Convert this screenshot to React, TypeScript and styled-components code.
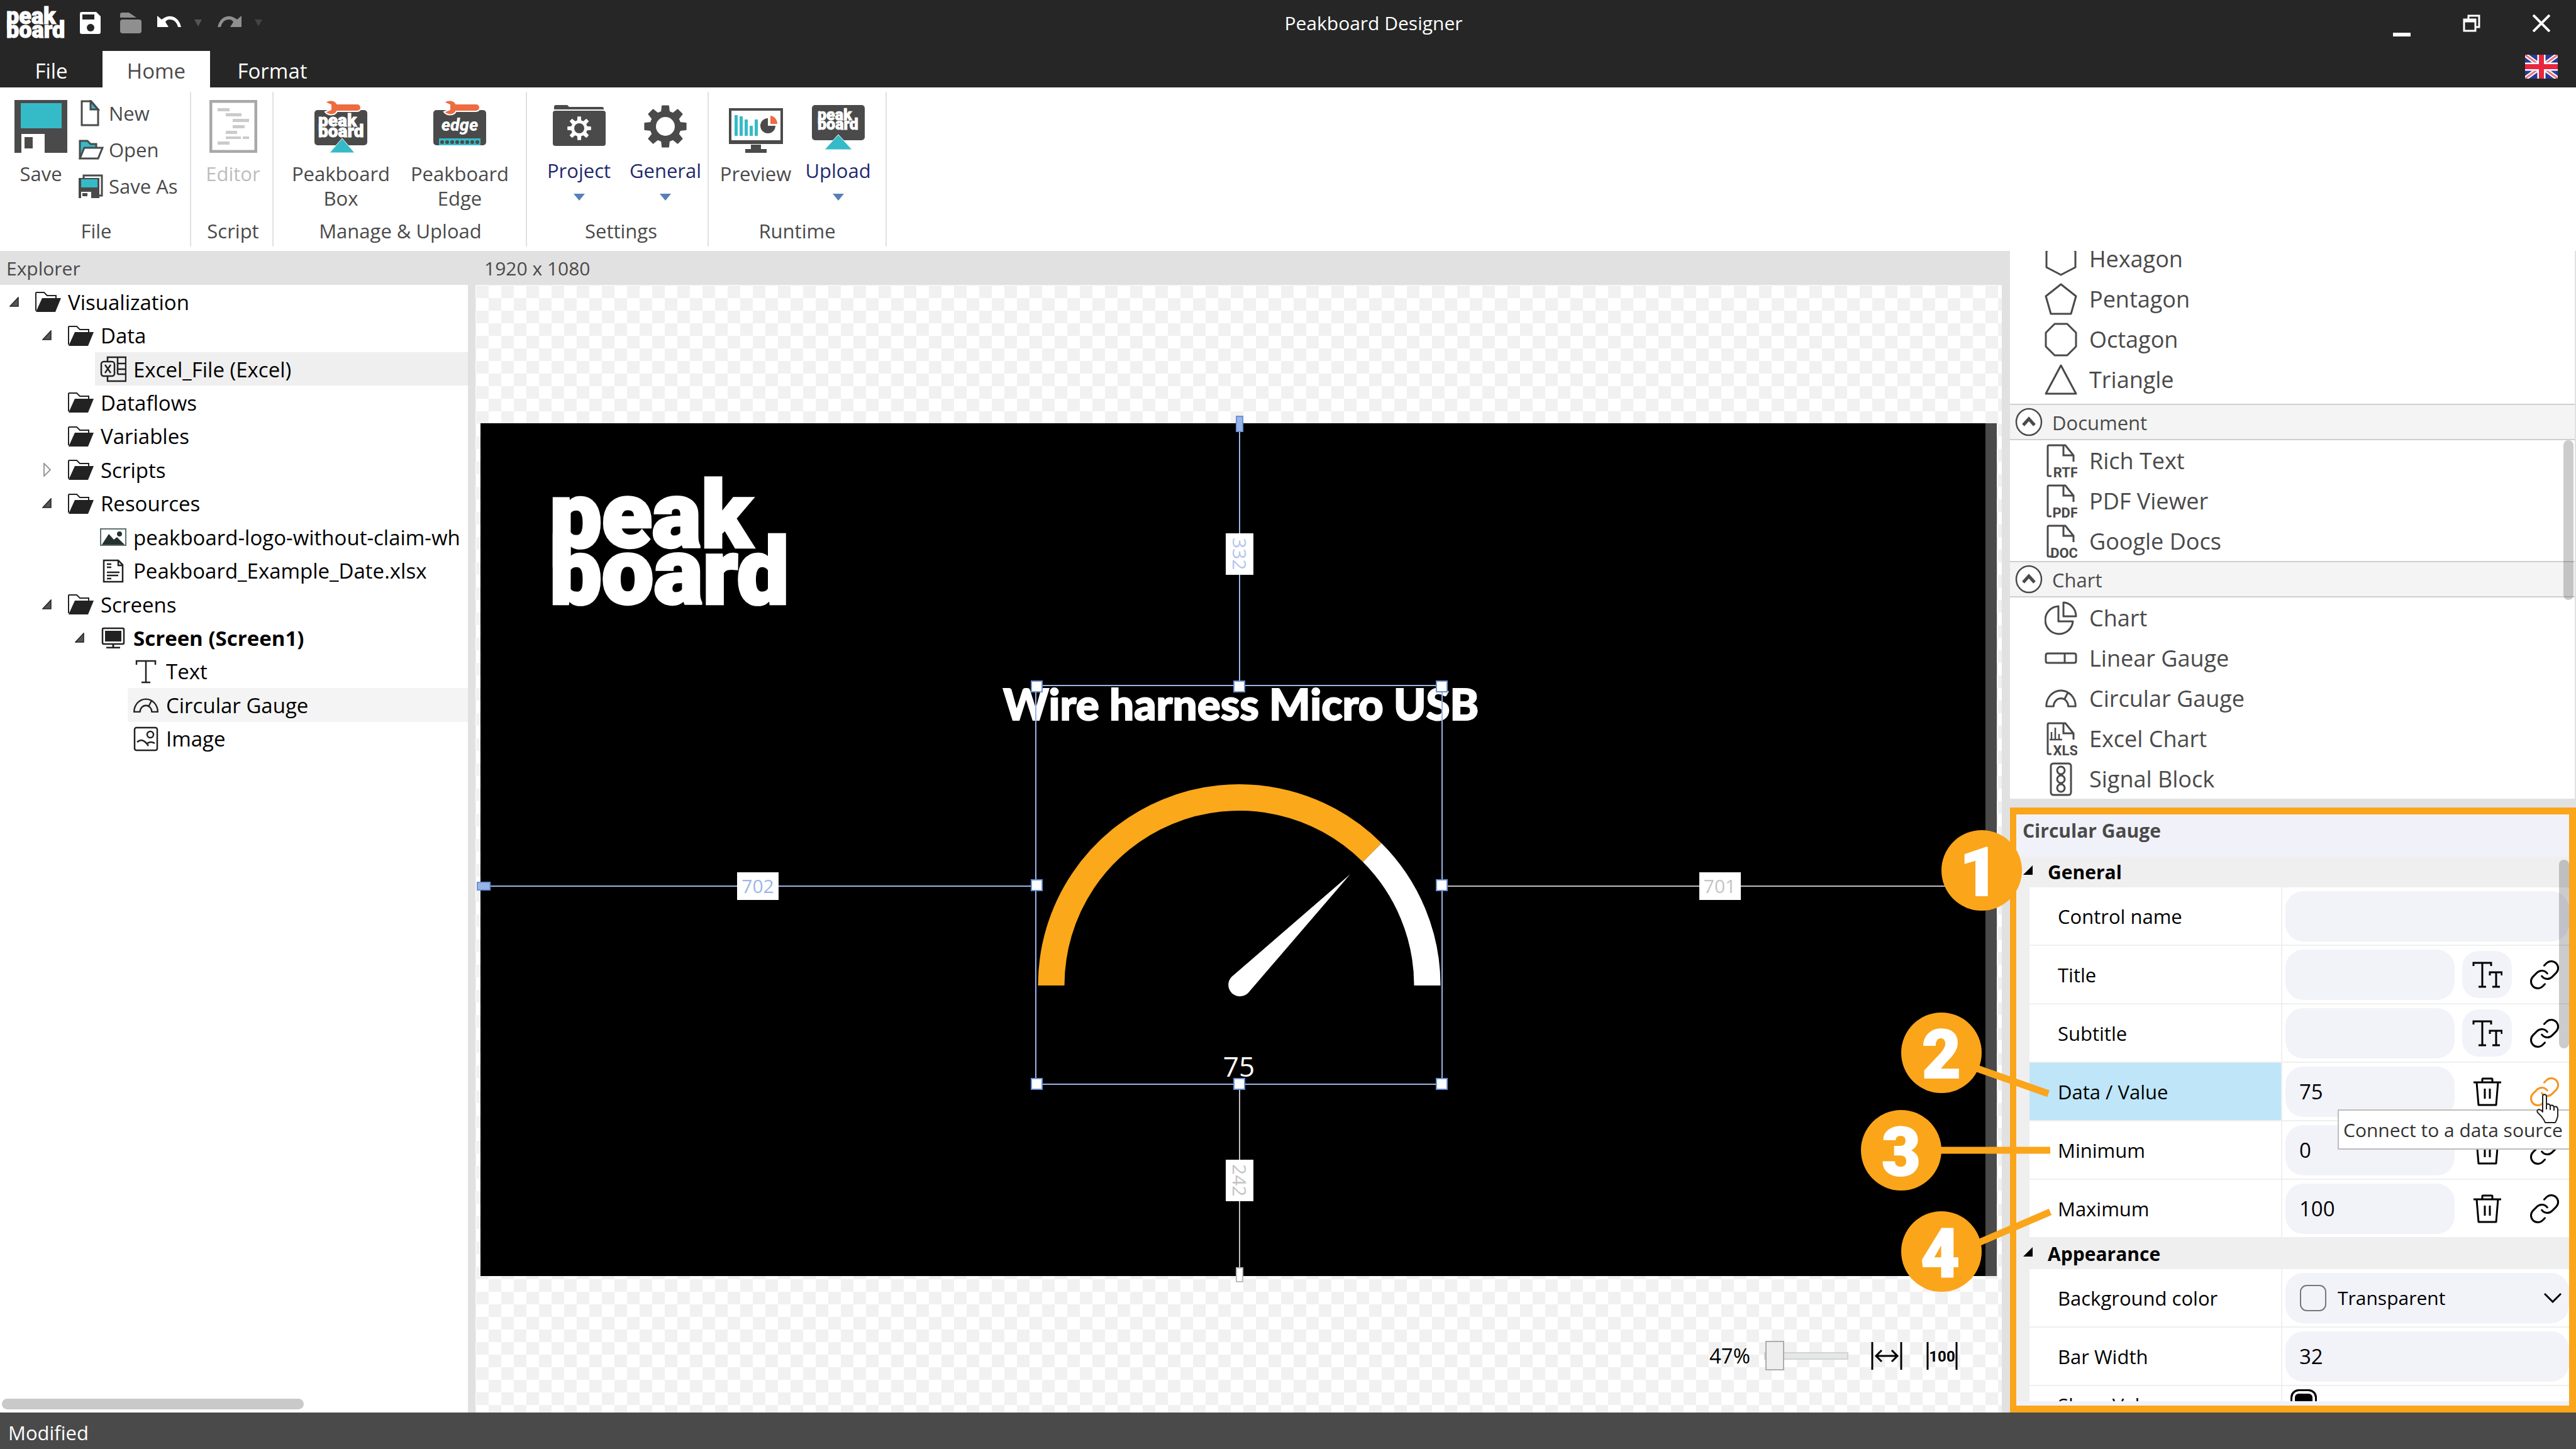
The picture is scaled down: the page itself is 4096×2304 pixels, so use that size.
import React from "react";
import styled, { createGlobalStyle, css } from "styled-components";
import { Link } from "lucide-react";

const UI = `"Open Sans", "Noto Sans", sans-serif`;
const DARK = "#4a4a4a";
const TEAL = "#35bac8";
const ORANGE = "#faa51a";
const CORAL = "#ee6c40";

const GlobalStyle = createGlobalStyle`
  *, *::before, *::after { box-sizing: border-box; }
  body { margin: 0; background: #fff; font-family: ${UI}; font-size: 31px; color: #000; }
  button, input, select { font: inherit; color: inherit; margin: 0; }
  button { background: none; border: 0; padding: 0; }
  svg { display: block; flex: none; }
  ul { list-style: none; margin: 0; padding: 0; }
  h2, h3 { margin: 0; font: inherit; }
`;

/* ---------- frame ---------- */
const Window = styled.div`
  display: flex;
  flex-direction: column;
  height: 100vh;
  overflow: hidden;
`;

const TitleBar = styled.header`
  display: flex;
  height: 81px;
  padding-bottom: 8px;
  background: #262626;
  color: #fff;
`;

const QuickAccess = styled.div`
  display: flex;
  align-items: center;
  width: 605px;
  padding-left: 11px;
`;

const QuickButton = styled.button<{ $gap: number }>`
  display: flex;
  align-items: center;
  margin-left: ${(p) => p.$gap}px;
`;

const WindowTitle = styled.div`
  flex: 1;
  display: flex;
  align-items: center;
  justify-content: center;
  font-size: 30px;
`;

const CaptionButton = styled.button`
  display: flex;
  align-items: center;
  justify-content: center;
  width: 111px;
`;

const TabStrip = styled.nav`
  display: flex;
  height: 58px;
  background: #262626;
`;

const Tab = styled.button<{ $active?: boolean; $width: number }>`
  width: ${(p) => p.$width}px;
  padding-top: 5px;
  font-size: 33px;
  line-height: 46px;
  color: ${(p) => (p.$active ? DARK : "#fff")};
  background: ${(p) => (p.$active ? "#fff" : "transparent")};
`;

const LanguageButton = styled.button`
  margin: 0 29px 0 auto;
  padding-bottom: 8px;
  display: flex;
  align-items: center;
`;

/* ---------- ribbon ---------- */
const Ribbon = styled.div`
  display: flex;
  height: 260px;
  padding: 7px 0;
  background: #fff;
  color: ${DARK};
`;

const Group = styled.section<{ $width: number; $shift?: number }>`
  display: flex;
  flex-direction: column;
  width: ${(p) => p.$width}px;
  padding: 0 0 5px ${(p) => p.$shift ?? 0}px;
  border-right: 2px solid #e1e1e1;
`;

const GroupItems = styled.div`
  flex: 1;
  display: flex;
  justify-content: center;
`;

const GroupLabel = styled.div`
  text-align: center;
  line-height: 40px;
`;

const RibbonButton = styled.button<{ $width: number; $menu?: boolean }>`
  display: flex;
  flex-direction: column;
  align-items: center;
  gap: ${(p) => (p.$menu ? 9 : 14)}px;
  width: ${(p) => p.$width}px;
  padding-top: 13px;
  line-height: 39px;
  color: ${(p) => (p.$menu ? "#1f2a6e" : DARK)};
  &:disabled { color: #bdbdbd; }
`;

const Caret = styled.span<{ $color: string; $size?: number }>`
  width: 0;
  height: 0;
  border: ${(p) => p.$size ?? 9}px solid transparent;
  border-top: 11px solid ${(p) => p.$color};
  border-bottom: 0;
`;

const MenuCaret = styled(Caret)`
  margin-top: 8px;
`;

const Stack = styled.div`
  display: flex;
  flex-direction: column;
  padding: 5px 0 0 10px;
  width: 176px;
`;

const SmallButton = styled.button`
  display: grid;
  grid-template-columns: 40px auto;
  align-items: center;
  justify-items: start;
  column-gap: 8px;
  height: 58px;
  justify-content: start;
  white-space: nowrap;
`;

/* ---------- body ---------- */
const Body = styled.div`
  flex: 1;
  min-height: 0;
  display: flex;
  background: #e1e1e1;
`;

const PaneTitle = styled.h2`
  height: 54px;
  line-height: 56px;
  font-size: 30px;
  color: ${DARK};
`;

const Explorer = styled.aside`
  display: flex;
  flex-direction: column;
  width: 744px;
  flex: none;
`;

const ExplorerTitle = styled(PaneTitle)`
  padding-left: 10px;
`;

const TreeArea = styled.div`
  flex: 1;
  min-height: 0;
  background: #fff;
  overflow: hidden;
`;

const Tree = styled.ul`
  display: grid;
  grid-auto-rows: 1fr;
  height: 748px;
`;

const TreeRow = styled.li<{ $level: number }>`
  display: flex;
  padding-left: ${(p) => p.$level * 52}px;
`;

const Toggle = styled.span`
  display: flex;
  align-items: center;
  justify-content: flex-end;
  width: 47px;
  padding-right: 17px;
  flex: none;
`;

const TreeItem = styled.button<{ $bg?: string; $bold?: boolean }>`
  flex: 1;
  display: flex;
  align-items: center;
  gap: 11px;
  padding: 1px 0 0 8px;
  font-size: 33px;
  white-space: nowrap;
  text-align: left;
  font-weight: ${(p) => (p.$bold ? 700 : 400)};
  background: ${(p) => p.$bg ?? "transparent"};
`;

const TreeIcon = styled.span`
  width: 42px;
  display: flex;
  justify-content: center;
  flex: none;
`;

const ScrollTrack = styled.div`
  height: 24px;
  padding: 2px 3px;
  background: #fff;
`;

const ScrollThumb = styled.div`
  width: 480px;
  height: 17px;
  border-radius: 9px;
  background: #c9c9c9;
`;

/* ---------- stage ---------- */
const Workspace = styled.main`
  flex: 1;
  min-width: 0;
  display: flex;
  flex-direction: column;
  margin-left: 12px;
`;

const WorkspaceTitle = styled(PaneTitle)`
  padding-left: 14px;
`;

const Stage = styled.div`
  flex: 1;
  display: flex;
  flex-direction: column;
  padding: 220px 8px 0;
  background: repeating-conic-gradient(#fff 0 25%, #f1f1f1 0 50%) 1px 1px / 40px 40px;
`;

const Canvas = styled.div`
  position: relative;
  flex: 1;
  background: #000;
  border-right: 18px solid ${DARK};
`;

const CanvasLogo = styled.div`
  position: absolute;
  left: 114px;
  top: 88px;
`;

const CanvasTitle = styled.div`
  position: absolute;
  left: 831px;
  top: 404px;
  font: 900 69px/84px Lato, "Open Sans", sans-serif;
  -webkit-text-stroke: 2px #fff;
  color: #fff;
  white-space: nowrap;
`;

const Selection = styled.div`
  position: absolute;
  left: 882px;
  top: 416px;
  width: 648px;
  height: 636px;
  border: 2px solid #9ab4e6;
`;

const GaugeValue = styled.div`
  position: absolute;
  left: 0;
  right: 0;
  bottom: 0;
  text-align: center;
  font-size: 44px;
  line-height: 56px;
  color: #fff;
`;

const Handle = styled.span<{ $x: number; $y: number }>`
  position: absolute;
  left: ${(p) => p.$x}%;
  top: ${(p) => p.$y}%;
  width: 19px;
  height: 19px;
  margin: -9px 0 0 -9px;
  background: #fff;
  border: 2px solid #6c93d6;
`;

const Guide = styled.div<{ $side: "top" | "left" | "right" | "bottom" }>`
  position: absolute;
  display: flex;
  align-items: center;
  justify-content: center;
  ${(p) => p.$side === "top" && css`left: 1206px; top: 0; width: 2px; height: 416px; background: #9ab4e6;`}
  ${(p) => p.$side === "bottom" && css`left: 1206px; top: 1052px; width: 2px; bottom: 0; background: #bdbdbd;`}
  ${(p) => p.$side === "left" && css`left: 0; top: 735px; height: 2px; width: 882px; background: #9ab4e6;`}
  ${(p) => p.$side === "right" && css`left: 1530px; top: 735px; height: 2px; right: -18px; background: #bdbdbd;`}
`;

const GuideLabel = styled.span<{ $vertical?: boolean; $color: string }>`
  display: flex;
  align-items: center;
  justify-content: center;
  flex: none;
  width: ${(p) => (p.$vertical ? 44 : 66)}px;
  height: ${(p) => (p.$vertical ? 66 : 44)}px;
  writing-mode: ${(p) => (p.$vertical ? "vertical-rl" : "horizontal-tb")};
  font-size: 30px;
  line-height: 44px;
  color: ${(p) => p.$color};
  background: #fff;
`;

const GuideEnd = styled.i<{ $side: "top" | "left" | "bottom" }>`
  position: absolute;
  border: 2px solid #6c93d6;
  background: #9ab4e6;
  ${(p) => p.$side === "top" && css`top: -12px; left: -5px; width: 12px; height: 26px;`}
  ${(p) => p.$side === "left" && css`left: -6px; top: -6px; width: 22px; height: 14px;`}
  ${(p) => p.$side === "bottom" && css`bottom: -10px; left: -5px; width: 12px; height: 24px; background: #fff; border-color: #bdbdbd;`}
`;

const ZoomBar = styled.div`
  display: flex;
  align-items: center;
  justify-content: flex-end;
  height: 217px;
  padding: 36px 62px 0 0;
`;

const ZoomLabel = styled.label`
  font-size: 33px;
  line-height: 46px;
  margin-right: 22px;
`;

const ZoomSlider = styled.input`
  appearance: none;
  width: 134px;
  height: 47px;
  margin: 0 36px 0 0;
  background: transparent;
  &::-webkit-slider-runnable-track {
    height: 12px;
    background: #e5e8e8;
    border: 2px solid #d3d3d3;
  }
  &::-webkit-slider-thumb {
    appearance: none;
    width: 30px;
    height: 47px;
    margin-top: -20px;
    background: #eee;
    border: 2px solid #adadad;
  }
`;

const ZoomButton = styled.button`
  width: 50px;
  height: 46px;
  & + & { margin-left: 38px; }
`;

/* ---------- right column ---------- */
const Side = styled.aside`
  width: 900px;
  margin-left: 13px;
  flex: none;
  display: flex;
  flex-direction: column;
`;

const Toolbox = styled.div`
  position: relative;
  overflow: hidden;
  background: #fff;
  color: ${DARK};
  border-right: 2px solid #e1e1e1;
`;

const ToolHeader = styled.button`
  display: flex;
  align-items: center;
  gap: 15px;
  width: 100%;
  height: 58px;
  padding-left: 8px;
  background: #f4f4f4;
  border: solid #cfcfcf;
  border-width: 2px 0;
`;

const HeaderText = styled.span`
  padding-top: 2px;
`;

const ToolList = styled.ul<{ $scrolled?: boolean }>`
  margin-top: ${(p) => (p.$scrolled ? -20 : 0)}px;
  padding-bottom: ${(p) => (p.$scrolled ? 7 : 0)}px;
`;

const ToolRow = styled.li`
  display: flex;
  align-items: center;
  gap: 19px;
  height: 64px;
  padding: 1px 0 0 55px;
  font-size: 36px;
`;

const VThumb = styled.div<{ $top: number; $height: number }>`
  position: absolute;
  right: 2px;
  top: ${(p) => p.$top}px;
  width: 16px;
  height: ${(p) => p.$height}px;
  border-radius: 8px;
  background: rgba(0, 0, 0, 0.2);
`;

const PropThumb = styled(VThumb)`
  right: 0;
`;

const Properties = styled.section`
  position: relative;
  flex: 1;
  min-height: 0;
  margin-top: 14px;
  display: flex;
  flex-direction: column;
  padding-bottom: 7px;
  background: #f1f2f9;
  border: 11px solid ${ORANGE};
  border-left-width: 10px;
`;

const PropTitle = styled.h2`
  height: 67px;
  padding: 5px 0 0 10px;
  font-size: 30px;
  font-weight: 700;
  line-height: 42px;
  color: ${DARK};
`;

const PropScroll = styled.div`
  position: relative;
  flex: 1;
  min-height: 0;
  overflow: hidden;
  background: #efefef;
`;

const Section = styled.h3`
  display: flex;
  align-items: center;
  gap: 24px;
  height: 49px;
  padding-left: 11px;
  font-size: 30px;
  font-weight: 700;
`;

const PropRow = styled.div<{ $short?: boolean }>`
  display: grid;
  grid-template-columns: 400px 1fr;
  column-gap: 2px;
  height: ${(p) => (p.$short ? 60 : 93)}px;
  margin-left: 21px;
  padding-bottom: 2px;
`;

const PropLabel = styled.label<{ $selected?: boolean }>`
  display: flex;
  align-items: center;
  padding: 1px 0 0 45px;
  background: ${(p) => (p.$selected ? "#bee5f8" : "#fff")};
`;

const PropCell = styled.div`
  display: flex;
  align-items: center;
  min-width: 0;
  padding-left: 5px;
  background: #fff;
`;

const Field = styled.input`
  flex: 1;
  min-width: 0;
  height: 80px;
  padding: 0 22px;
  border: 0;
  border-radius: 28px;
  background: #f2f3f9;
  font-size: 33px;
`;

const CellButton = styled.button<{ $filled?: boolean }>`
  flex: none;
  display: flex;
  align-items: center;
  justify-content: center;
  width: 79px;
  height: 75px;
  margin-left: 12px;
  border-radius: 26px;
  background: ${(p) => (p.$filled ? "#f2f3f9" : "transparent")};
`;

const Combo = styled.div`
  flex: 1;
  display: flex;
  align-items: center;
  height: 80px;
  padding: 0 12px 0 23px;
  border-radius: 28px;
  background: #f2f3f9;
`;

const Swatch = styled.span`
  width: 42px;
  height: 42px;
  border: 2px solid #777;
  border-radius: 11px;
`;

const Select = styled.select`
  appearance: none;
  flex: 1;
  border: 0;
  padding: 0 0 0 18px;
  background: transparent;
  font-size: 30px;
`;

const Check = styled.input`
  appearance: none;
  align-self: flex-start;
  width: 42px;
  height: 42px;
  margin: 5px 0 0 8px;
  border: 3px solid #000;
  border-radius: 13px;
  background: #fff;
  &:checked { background: #000; box-shadow: inset 0 0 0 4px #fff; }
`;

const Tooltip = styled.div`
  position: absolute;
  right: 0;
  top: 402px;
  width: 368px;
  height: 64px;
  padding: 5px 0 0 7px;
  border: 2px solid #bdbdbd;
  border-right: 0;
  background: #fff;
  font-size: 30px;
  line-height: 52px;
  white-space: nowrap;
  color: #333;
`;

const Cursor = styled.svg`
  position: absolute;
  right: 15px;
  top: 377px;
`;

const Callouts = styled.svg`
  position: absolute;
  left: -250px;
  top: -11px;
  pointer-events: none;
`;

const StatusBar = styled.footer`
  height: 58px;
  padding: 5px 0 0 13px;
  line-height: 54px;
  font-size: 31px;
  background: ${DARK};
  color: #fff;
`;

/* ---------- drawings ---------- */
const LogoMark = ({ size, x = 0, y = 0 }: { size: number; x?: number; y?: number }) => (
  <g fontFamily="Roboto, sans-serif" fontWeight={900} fontSize={size} fill="#fff" stroke="#fff" strokeWidth={size * 0.03}>
    <text x={x} y={y}>peak</text>
    <text x={x} y={y + size * 0.61}>board</text>
  </g>
);

const gearPath = (cx: number, cy: number, r: number, root: number) => {
  const pts: string[] = [];
  for (let i = 0; i < 8; i++) {
    const a = (i * Math.PI) / 4;
    [[root, -0.25], [r, -0.15], [r, 0.15], [root, 0.25]].forEach(([d, o]) => {
      pts.push(`${(cx + d * Math.sin(a + o)).toFixed(1)} ${(cy - d * Math.cos(a + o)).toFixed(1)}`);
    });
  }
  return `M${pts.join("L")}Z`;
};

const SaveIcon = () => (
  <svg width="84" height="84">
    <rect width="84" height="84" fill={DARK} />
    <rect x="10" y="5" width="65" height="40" fill={TEAL} />
    <path d="M11 84V54H48V84Z" fill="#fff" />
    <rect x="16" y="59" width="13" height="18" fill={DARK} />
  </svg>
);

const NewIcon = () => (
  <svg width="40" height="42" fill="#fff" stroke={DARK} strokeWidth="3">
    <path d="M5 2H20L31 15V40H5Z" />
    <path d="M19 2V15H31Z" fill={TEAL} />
  </svg>
);

const OpenIcon = () => (
  <svg width="40" height="32" stroke={DARK} strokeWidth="3">
    <path d="M2 30V2H14L19 7H28V13" fill={TEAL} />
    <path d="M9 13H38L31 30H2Z" fill="#fff" />
  </svg>
);

const SaveAsIcon = () => (
  <svg width="40" height="38">
    <path d="M8 6V2H37V34H32" fill="#fff" stroke={DARK} strokeWidth="3" />
    <rect x="0" y="6" width="33" height="32" fill={DARK} />
    <rect x="4" y="8" width="26" height="13" fill={TEAL} />
    <rect x="4" y="28" width="16" height="10" fill="#fff" />
    <rect x="6" y="30" width="8" height="5" fill={DARK} />
  </svg>
);

const EditorIcon = () => (
  <svg width="76" height="84" fill="#cbcbcb">
    <rect x="2" y="2" width="72" height="80" fill="#fff" stroke="#a8a8a8" strokeWidth="5" />
    <rect x="13" y="13" width="19" height="5" />
    <rect x="26" y="21" width="25" height="5" />
    <rect x="37" y="30" width="26" height="5" />
    <rect x="37" y="40" width="19" height="5" />
    <rect x="26" y="49" width="18" height="5" />
    <rect x="26" y="58" width="24" height="4" />
    <rect x="53" y="58" width="10" height="4" />
    <rect x="13" y="66" width="19" height="5" />
  </svg>
);

const Wrench = () => (
  <path
    d="M17 4C22 -1 33 -1 36 6H68A6 6 0 0 1 68 18H36C33 25 22 25 17 19L26 15V8Z"
    fill={CORAL}
    stroke="#fff"
    strokeWidth="2"
  />
);

const BoxIcon = () => (
  <svg width="84" height="84">
    <rect y="16" width="84" height="56" rx="5" fill={DARK} />
    <LogoMark size={28} x={6} y={42} />
    <Wrench />
    <path d="M44 61L64 84H24Z" fill={TEAL} stroke="#fff" strokeWidth="1" />
  </svg>
);

const EdgeIcon = () => (
  <svg width="84" height="84">
    <rect y="16" width="84" height="56" rx="5" fill={DARK} />
    <text x="42" y="49" textAnchor="middle" fontFamily="Roboto, sans-serif" fontWeight="900" fontStyle="italic" fontSize="27" fill="#fff">edge</text>
    <Wrench />
    <rect x="9" y="61" width="66" height="11" fill={TEAL} />
    {[14, 22, 30, 38, 46, 54, 62, 70].map((x) => (
      <circle key={x} cx={x} cy="67" r="3" fill={DARK} />
    ))}
  </svg>
);

const ProjectIcon = () => (
  <svg width="84" height="84">
    <path d="M2 14V11Q2 8 5 8H23L26 11H78Q81 11 81 14V15H2Z" fill={DARK} />
    <rect y="17" width="84" height="56" rx="4" fill={DARK} />
    <path d={gearPath(42, 45, 19, 13)} fill="#fff" />
    <circle cx="42" cy="45" r="8" fill={DARK} />
  </svg>
);

const GearIcon = () => (
  <svg width="84" height="84">
    <path d={gearPath(42, 42, 33, 24)} fill={DARK} stroke={DARK} strokeWidth="2" strokeLinejoin="round" />
    <circle cx="42" cy="42" r="15" fill="#fff" />
  </svg>
);

const PreviewIcon = () => (
  <svg width="86" height="84">
    <rect x="2" y="15" width="82" height="53" fill="#fff" stroke={DARK} strokeWidth="4" />
    <rect x="2" y="64" width="82" height="6" fill={DARK} />
    <rect x="35" y="71" width="16" height="8" fill={DARK} />
    <rect x="26" y="78" width="34" height="6" fill={DARK} />
    {[[9, 24], [17, 26], [25, 31], [33, 41], [41, 31]].map(([x, y]) => (
      <rect key={x} x={x} y={y} width="5" height={57 - y} fill={TEAL} />
    ))}
    <path d="M62 29V41H74A12 12 0 1 1 62 29Z" fill={DARK} />
    <path d="M66 25A12 13 0 0 1 77 38H66Z" fill={CORAL} />
  </svg>
);

const UploadIcon = () => (
  <svg width="84" height="84">
    <rect y="8" width="84" height="56" rx="5" fill={DARK} />
    <LogoMark size={25} x={9} y={32} />
    <path d="M42 55L64 79H20Z" fill={TEAL} stroke="#fff" strokeWidth="1" />
  </svg>
);

const FlagIcon = () => (
  <svg width="52" height="38">
    <rect width="52" height="38" fill="#2a3a94" />
    <path d="M0 0L52 38M52 0L0 38" stroke="#fff" strokeWidth="7" />
    <path d="M0 0L52 38M52 0L0 38" stroke="#e8707f" strokeWidth="3" />
    <path d="M26 0V38M0 19H52" stroke="#fff" strokeWidth="13" />
    <path d="M26 0V38M0 19H52" stroke="#e8263f" strokeWidth="8" />
  </svg>
);

const ExpandedMark = () => (
  <svg width="15" height="16"><path d="M1 15H14V1Z" fill="#555" stroke="#222" strokeWidth="1.5" /></svg>
);
const SectionMark = () => (
  <svg width="15" height="22"><path d="M0 15H15V0Z" fill="#000" /></svg>
);
const CollapsedMark = () => (
  <svg width="14" height="22"><path d="M2 1L12 11L2 21Z" fill="#fff" stroke="#999" strokeWidth="2" /></svg>
);

const FolderIcon = () => (
  <svg width="42" height="34">
    <path d="M2 31V3Q2 2 3 2H15L20 7H34V12" fill="#fff" stroke="#222" strokeWidth="2" />
    <path d="M12 11H42L33 33H2Z" fill="#222" />
  </svg>
);

const ExcelIcon = () => (
  <svg width="42" height="42" fill="none" stroke="#222" strokeWidth="2.5">
    <path d="M12 10V2H41V40H12V32M28 2V29M28 12H41M28 21H41M28 29H41" />
    <rect x="2" y="9" width="21" height="23" rx="4" fill="#efefef" />
    <path d="M8 14L17 27M17 14L8 27" />
  </svg>
);

const PictureIcon = () => (
  <svg width="42" height="28">
    <rect x="1" y="1" width="40" height="26" fill="#fff" stroke="#5d7070" strokeWidth="2" />
    <path d="M3 26L14 9L22 18L27 14L39 26Z" fill="#243331" />
    <circle cx="31" cy="9" r="4" fill="#243331" />
  </svg>
);

const DocIcon = () => (
  <svg width="34" height="38" fill="none" stroke="#222" strokeWidth="2.5">
    <path d="M2 2H25L32 9V36H2Z" />
    <path d="M7 8H14M7 13H14M7 21H27M7 26H25M7 31H14M25 2V10H32" />
  </svg>
);

const ScreenIcon = () => (
  <svg width="38" height="34">
    <rect x="2" y="2" width="34" height="25" rx="2" fill="#fff" stroke="#222" strokeWidth="2.5" />
    <rect x="6" y="6" width="26" height="17" fill="#222" />
    <path d="M19 27V32M8 33H30" stroke="#222" strokeWidth="3" />
  </svg>
);

const TextIcon = () => (
  <svg width="34" height="38" fill="none" stroke="#222" strokeWidth="2.5">
    <path d="M2 8V2H32V8M17 2V36M10 36H24" />
  </svg>
);

const GaugeIcon = ({ size = 52, color = DARK }: { size?: number; color?: string }) => (
  <svg width={size} height={size * 0.56} viewBox="0 0 52 30" fill="none" stroke={color} strokeWidth="3" strokeLinejoin="round">
    <path d="M2 28A24 26 0 0 1 50 28H38A12 13 0 0 0 14 28ZM32 16L37 6" />
  </svg>
);

const ImageIcon = () => (
  <svg width="40" height="40" fill="none" stroke="#222" strokeWidth="2.5">
    <rect x="2" y="2" width="36" height="36" rx="3" />
    <circle cx="27" cy="13" r="5" />
    <path d="M6 25Q15 17 24 31M22 27Q28 23 34 27" />
  </svg>
);

const Shape = ({ d }: { d: string }) => (
  <svg width="52" height="54" viewBox="0 0 52 54" fill="none" stroke={DARK} strokeWidth="3" strokeLinejoin="round">
    <path d={d} />
  </svg>
);

const FileIcon = ({ tag, bars }: { tag: string; bars?: boolean }) => (
  <svg width="52" height="54" viewBox="0 0 52 54" fill="none" stroke={DARK} strokeWidth="3">
    <path d="M11 51H7Q5 51 5 49V4Q5 2 7 2H33L46 18V28M30 2V18H46" />
    {bars && <path d="M11 16V28M17 9V28M23 19V28M8 28H28" strokeWidth="2.5" />}
    <text x="53" y="53" textAnchor="end" fontFamily="Roboto, sans-serif" fontWeight="700" fontSize="22" fill={DARK} stroke="none">{tag}</text>
  </svg>
);

const ChevronCircle = () => (
  <svg width="44" height="46" fill="none" stroke={DARK}>
    <ellipse cx="22" cy="23" rx="20" ry="21" fill="#fff" strokeWidth="2.5" />
    <path d="M13 28L22 18L31 28" strokeWidth="5" />
  </svg>
);

const TypeIcon = () => (
  <svg width="48" height="42" fill="none" stroke="#000" strokeWidth="3">
    <path d="M2 7V2H30V7M16 2V40M10 40H22M28 22V17H47V22M38 17V40M32 40H44" />
  </svg>
);

const TrashIcon = () => (
  <svg width="46" height="46" fill="none" stroke="#000" strokeWidth="3" strokeLinejoin="round">
    <path d="M1 8H45M6 8L9 44H37L40 8M15 8V3Q15 2 16 2H30Q31 2 31 3V8M19 18V34M27 18V34" />
  </svg>
);

/* ---------- data ---------- */
type Node = { label: string; level: number; icon: React.ReactNode; open?: boolean; bg?: string; bold?: boolean };

const tree: Node[] = [
  { label: "Visualization", level: 0, icon: <FolderIcon />, open: true },
  { label: "Data", level: 1, icon: <FolderIcon />, open: true },
  { label: "Excel_File (Excel)", level: 2, icon: <ExcelIcon />, bg: "#efefef" },
  { label: "Dataflows", level: 1, icon: <FolderIcon /> },
  { label: "Variables", level: 1, icon: <FolderIcon /> },
  { label: "Scripts", level: 1, icon: <FolderIcon />, open: false },
  { label: "Resources", level: 1, icon: <FolderIcon />, open: true },
  { label: "peakboard-logo-without-claim-wh", level: 2, icon: <PictureIcon /> },
  { label: "Peakboard_Example_Date.xlsx", level: 2, icon: <DocIcon /> },
  { label: "Screens", level: 1, icon: <FolderIcon />, open: true },
  { label: "Screen (Screen1)", level: 2, icon: <ScreenIcon />, open: true, bold: true },
  { label: "Text", level: 3, icon: <TextIcon /> },
  { label: "Circular Gauge", level: 3, icon: <GaugeIcon size={42} color="#222" />, bg: "#f4f4f4" },
  { label: "Image", level: 3, icon: <ImageIcon /> },
];

const shapes = [
  { label: "Hexagon", icon: <Shape d="M26 3L49 14V40L26 52L3 40V14Z" /> },
  { label: "Pentagon", icon: <Shape d="M26 3L50 22L42 50H10L2 22Z" /> },
  { label: "Octagon", icon: <Shape d="M16 2H36L50 16V38L36 52H16L2 38V16Z" /> },
  { label: "Triangle", icon: <Shape d="M26 4L50 49H2Z" /> },
];

const documents = [
  { label: "Rich Text", icon: <FileIcon tag="RTF" /> },
  { label: "PDF Viewer", icon: <FileIcon tag="PDF" /> },
  { label: "Google Docs", icon: <FileIcon tag="DOC" /> },
];

const charts = [
  { label: "Chart", icon: <Shape d="M22 8V32H45A22 22 0 1 1 22 8ZM30 2A21 22 0 0 1 50 24H30Z" /> },
  { label: "Linear Gauge", icon: <Shape d="M5 19H47Q50 19 50 22V31Q50 34 47 34H5Q2 34 2 31V22Q2 19 5 19ZM32 19V34" /> },
  { label: "Circular Gauge", icon: <GaugeIcon /> },
  { label: "Excel Chart", icon: <FileIcon tag="XLS" bars /> },
  {
    label: "Signal Block",
    icon: (
      <svg width="52" height="54" fill="none" stroke={DARK} strokeWidth="3">
        <rect x="10" y="2" width="32" height="50" rx="4" />
        <circle cx="26" cy="13" r="6" />
        <circle cx="26" cy="27" r="6" />
        <circle cx="26" cy="41" r="6" />
      </svg>
    ),
  },
];

const handles = [[0, 0], [50, 0], [100, 0], [0, 50], [100, 50], [0, 100], [50, 100], [100, 100]];

const Tools = ({ items, scrolled }: { items: { label: string; icon: React.ReactNode }[]; scrolled?: boolean }) => (
  <ToolList $scrolled={scrolled}>
    {items.map((t) => (
      <ToolRow key={t.label}>{t.icon}{t.label}</ToolRow>
    ))}
  </ToolList>
);

const Property = ({ id, label, value, kind, selected }: { id: string; label: string; value: string; kind: "plain" | "text" | "data"; selected?: boolean }) => (
  <PropRow>
    <PropLabel htmlFor={id} $selected={selected}>{label}</PropLabel>
    <PropCell>
      <Field id={id} defaultValue={value} />
      {kind === "text" && <CellButton $filled aria-label="Text options"><TypeIcon /></CellButton>}
      {kind === "data" && <CellButton aria-label="Clear"><TrashIcon /></CellButton>}
      {kind !== "plain" && (
        <CellButton aria-label="Connect">
          <Link size={52} strokeWidth={1.4} color={selected ? "#f7941d" : "#000"} />
        </CellButton>
      )}
    </PropCell>
  </PropRow>
);

export default function App() {
  return (
    <Window>
      <GlobalStyle />
      <TitleBar>
        <QuickAccess>
          <svg width="92" height="56" overflow="visible"><LogoMark size={36} x={-1} y={29} /></svg>
          <QuickButton $gap={24} aria-label="Save">
            <svg width="33" height="35">
              <path d="M3 0H26L33 7V32Q33 35 30 35H3Q0 35 0 32V3Q0 0 3 0Z" fill="#fff" />
              <rect x="4" y="4" width="19" height="8" fill="#262626" />
              <circle cx="17" cy="25" r="6" fill="#262626" />
            </svg>
          </QuickButton>
          <QuickButton $gap={31} aria-label="Open">
            <svg width="34" height="33" fill="#8f8f8f">
              <path d="M0 8V3Q0 0 3 0H14L26 8Z" />
              <rect y="11" width="34" height="22" rx="4" />
            </svg>
          </QuickButton>
          <QuickButton $gap={25} aria-label="Undo">
            <svg width="38" height="24" overflow="visible">
              <path d="M0 0L7 6Q22 -5 33 7Q37 12 38 18H33Q30 6 20 6Q15 6 13 10L18 18H0Z" fill="#fff" />
            </svg>
          </QuickButton>
          <QuickButton $gap={21} aria-label="Undo list"><Caret $color="#555" $size={6} /></QuickButton>
          <QuickButton $gap={25} aria-label="Redo">
            <svg width="38" height="24" overflow="visible">
              <path d="M38 0L31 6Q16 -5 5 7Q1 12 0 18H5Q8 6 18 6Q23 6 25 10L20 18H38Z" fill="#8f8f8f" />
            </svg>
          </QuickButton>
          <QuickButton $gap={21} aria-label="Redo list"><Caret $color="#444" $size={6} /></QuickButton>
        </QuickAccess>
        <WindowTitle>Peakboard Designer</WindowTitle>
        <CaptionButton aria-label="Minimize">
          <svg width="28" height="42"><rect y="36" width="28" height="6" fill="#fff" /></svg>
        </CaptionButton>
        <CaptionButton aria-label="Restore">
          <svg width="28" height="28" fill="none" stroke="#fff" strokeWidth="3">
            <path d="M9 8V2H26V20H20" />
            <path d="M2 8H20V26H2ZM2 11H20" />
          </svg>
        </CaptionButton>
        <CaptionButton aria-label="Close">
          <svg width="28" height="28" stroke="#fff" strokeWidth="4"><path d="M1 1L27 27M27 1L1 27" /></svg>
        </CaptionButton>
      </TitleBar>
      <TabStrip>
        <Tab $width={163}>File</Tab>
        <Tab $width={171} $active>Home</Tab>
        <Tab $width={198}>Format</Tab>
        <LanguageButton aria-label="Language"><FlagIcon /></LanguageButton>
      </TabStrip>

      <Ribbon>
        <Group $width={304} $shift={4}>
          <GroupItems>
            <RibbonButton $width={100}><SaveIcon />Save</RibbonButton>
            <Stack>
              <SmallButton><NewIcon />New</SmallButton>
              <SmallButton><OpenIcon />Open</SmallButton>
              <SmallButton><SaveAsIcon />Save As</SmallButton>
            </Stack>
          </GroupItems>
          <GroupLabel>File</GroupLabel>
        </Group>
        <Group $width={131} $shift={4}>
          <GroupItems>
            <RibbonButton $width={120} disabled><EditorIcon />Editor</RibbonButton>
          </GroupItems>
          <GroupLabel>Script</GroupLabel>
        </Group>
        <Group $width={403} $shift={2}>
          <GroupItems>
            <RibbonButton $width={189}><BoxIcon /><span>Peakboard<br />Box</span></RibbonButton>
            <RibbonButton $width={189}><EdgeIcon /><span>Peakboard<br />Edge</span></RibbonButton>
          </GroupItems>
          <GroupLabel>Manage &amp; Upload</GroupLabel>
        </Group>
        <Group $width={289} $shift={12}>
          <GroupItems>
            <RibbonButton $width={141} $menu><ProjectIcon />Project<MenuCaret $color="#5580b8" /></RibbonButton>
            <RibbonButton $width={134} $menu><GearIcon />General<MenuCaret $color="#5580b8" /></RibbonButton>
          </GroupItems>
          <GroupLabel>Settings</GroupLabel>
        </Group>
        <Group $width={283}>
          <GroupItems>
            <RibbonButton $width={130}><PreviewIcon />Preview</RibbonButton>
            <RibbonButton $width={132} $menu><UploadIcon />Upload<MenuCaret $color="#5580b8" /></RibbonButton>
          </GroupItems>
          <GroupLabel>Runtime</GroupLabel>
        </Group>
      </Ribbon>

      <Body>
        <Explorer>
          <ExplorerTitle>Explorer</ExplorerTitle>
          <TreeArea>
            <Tree>
              {tree.map((n) => (
                <TreeRow key={n.label} $level={n.level}>
                  <Toggle>{n.open === true ? <ExpandedMark /> : n.open === false ? <CollapsedMark /> : null}</Toggle>
                  <TreeItem $bg={n.bg} $bold={n.bold}>
                    <TreeIcon>{n.icon}</TreeIcon>
                    {n.label}
                  </TreeItem>
                </TreeRow>
              ))}
            </Tree>
          </TreeArea>
          <ScrollTrack><ScrollThumb /></ScrollTrack>
        </Explorer>

        <Workspace>
          <WorkspaceTitle>1920 x 1080</WorkspaceTitle>
          <Stage>
            <Canvas>
              <CanvasLogo>
                <svg width="380" height="210" overflow="visible"><LogoMark size={147} x={-4} y={109} /></svg>
              </CanvasLogo>
              <CanvasTitle>Wire harness Micro USB</CanvasTitle>
              <Guide $side="top"><GuideEnd $side="top" /><GuideLabel $vertical $color="#b4c6ec">332</GuideLabel></Guide>
              <Guide $side="left"><GuideEnd $side="left" /><GuideLabel $color="#9fb6e8">702</GuideLabel></Guide>
              <Guide $side="right"><GuideLabel $color="#c4c4c4">701</GuideLabel></Guide>
              <Guide $side="bottom"><GuideEnd $side="bottom" /><GuideLabel $vertical $color="#c4c4c4">242</GuideLabel></Guide>
              <Selection>
                <svg width="644" height="632" viewBox="0 0 644 632">
                  <path d="M23.500 476A299 299 0 0 1 533.900 264.600" fill="none" stroke="#fba81a" strokeWidth="42" />
                  <path d="M533.900 264.600A299 299 0 0 1 621.500 476" fill="none" stroke="#fff" strokeWidth="42" />
                  <path d="M499 299L336.700 487.700A18 18 0 1 1 310.300 462.300Z" fill="#fff" />
                </svg>
                <GaugeValue>75</GaugeValue>
                {handles.map(([x, y]) => <Handle key={`${x}-${y}`} $x={x} $y={y} />)}
              </Selection>
            </Canvas>
            <ZoomBar>
              <ZoomLabel htmlFor="zoom">47%</ZoomLabel>
              <ZoomSlider id="zoom" type="range" min="47" max="400" defaultValue="47" />
              <ZoomButton aria-label="Fit width">
                <svg width="50" height="46" fill="none" stroke="#000" strokeWidth="3">
                  <path d="M2 1V45M48 1V45M8 23H42M17 14L8 23L17 32M33 14L42 23L33 32" />
                </svg>
              </ZoomButton>
              <ZoomButton aria-label="Actual size">
                <svg width="50" height="46" stroke="#000" strokeWidth="3">
                  <path d="M2 1V45M48 1V45" />
                  <text x="25" y="32" textAnchor="middle" fontFamily="Roboto, sans-serif" fontWeight="700" fontSize="24" stroke="none">100</text>
                </svg>
              </ZoomButton>
            </ZoomBar>
          </Stage>
        </Workspace>

        <Side>
          <Toolbox>
            <Tools items={shapes} scrolled />
            <ToolHeader><ChevronCircle /><HeaderText>Document</HeaderText></ToolHeader>
            <Tools items={documents} />
            <ToolHeader><ChevronCircle /><HeaderText>Chart</HeaderText></ToolHeader>
            <Tools items={charts} />
            <VThumb $top={301} $height={254} />
          </Toolbox>

          <Properties>
            <PropTitle>Circular Gauge</PropTitle>
            <PropScroll>
              <Section><SectionMark />General</Section>
              <Property id="name" label="Control name" value="" kind="plain" />
              <Property id="title" label="Title" value="" kind="text" />
              <Property id="subtitle" label="Subtitle" value="" kind="text" />
              <Property id="value" label="Data / Value" value="75" kind="data" selected />
              <Property id="min" label="Minimum" value="0" kind="data" />
              <Property id="max" label="Maximum" value="100" kind="data" />
              <Section><SectionMark />Appearance</Section>
              <PropRow>
                <PropLabel htmlFor="bg">Background color</PropLabel>
                <PropCell>
                  <Combo>
                    <Swatch />
                    <Select id="bg"><option>Transparent</option></Select>
                    <svg width="28" height="18" fill="none" stroke="#000" strokeWidth="3"><path d="M1 2L14 15L27 2" /></svg>
                  </Combo>
                </PropCell>
              </PropRow>
              <Property id="bar" label="Bar Width" value="32" kind="plain" />
              <PropRow $short>
                <PropLabel htmlFor="show">Show Value</PropLabel>
                <PropCell><Check id="show" type="checkbox" defaultChecked /></PropCell>
              </PropRow>
              <PropThumb $top={5} $height={300} />
              <Tooltip role="tooltip">Connect to a data source</Tooltip>
              <Cursor width="38" height="48" fill="#fff" stroke="#222" strokeWidth="2" strokeLinejoin="round">
                <path d="M12 2Q16 0 17 4V17Q21 15 23 19Q27 17 29 21Q34 19 35 24V35Q34 41 31 46H15Q12 38 3 30Q1 26 5 25Q9 26 11 29V4Q11 2 12 2Z" />
                <path d="M17 17V25M23 19V26M29 21V27" />
              </Cursor>
            </PropScroll>
            <Callouts width="320" height="800" stroke={ORANGE} strokeWidth="11">
              <path d="M185 414L301 455M126 545H304M190 692L304 643" />
              <g fill={ORANGE} stroke="none">
                <circle cx="195" cy="100" r="64" />
                <circle cx="131" cy="390" r="64" />
                <circle cx="67" cy="545" r="64" />
                <circle cx="131" cy="706" r="64" />
              </g>
              <g fill="#fff" stroke="#fff" strokeWidth="2" textAnchor="middle" fontFamily="Roboto, sans-serif" fontWeight="900" fontSize="107">
                <text x="191" y="140">1</text>
                <text x="131" y="430">2</text>
                <text x="67" y="585">3</text>
                <text x="129" y="746">4</text>
              </g>
            </Callouts>
          </Properties>
        </Side>
      </Body>
      <StatusBar>Modified</StatusBar>
    </Window>
  );
}
